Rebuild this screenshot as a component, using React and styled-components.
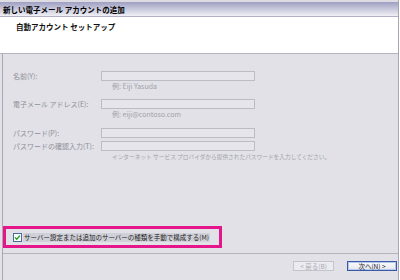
import React from "react";
import styled, { createGlobalStyle } from "styled-components";

const GlobalStyle = createGlobalStyle`
  html, body {
    margin: 0;
    padding: 0;
    background: #fff;
  }
  body {
    font-family: "Noto Sans CJK JP", "Liberation Sans", sans-serif;
  }
`;

const Window = styled.div`
  width: 399px;
  height: 280px;
  box-sizing: border-box;
  border-right: 1px solid #a6a6b0;
  display: flex;
  flex-direction: column;
  background: #e1e1e7;
`;

const TitleBar = styled.div`
  height: 17px;
  box-sizing: border-box;
  border-top: 2px solid #dcdce2;
  border-bottom: 1px solid #b2b2c4;
  background: linear-gradient(#9e9ec2, #c8c8dc 50%, #f0f0f5);
  padding-left: 3px;
  display: flex;
  align-items: center;
  font-size: 7.5px;
  font-weight: bold;
  color: #000;
`;

const Header = styled.div`
  height: 37px;
  box-sizing: border-box;
  background: #fff;
  border-bottom: 1px solid #b4b4be;
  padding: 5px 0 0 16px;
  font-size: 7.5px;
  line-height: 10px;
  font-weight: bold;
  color: #111;
`;

const Body = styled.div`
  flex: 1;
  display: flex;
  padding-left: 2px;
`;

const Content = styled.div`
  flex: 1;
  display: flex;
  flex-direction: column;
  border-left: 1px solid #a8a8b2;
`;

const Form = styled.div`
  padding: 17px 0 0 10px;
  display: flex;
  flex-direction: column;
`;

const Row = styled.div`
  display: grid;
  grid-template-columns: 88px 154px;
  align-items: center;
  height: 10px;
  margin-top: ${({ $gap }) => $gap || 0}px;
`;

const Label = styled.span`
  font-size: 7px;
  line-height: 10px;
  color: #909098;
  white-space: nowrap;
`;

const Field = styled.div`
  height: 10px;
  box-sizing: border-box;
  border: 1px solid #bcbcc4;
  background: #e5e5eb;
`;

const Hint = styled.div`
  padding-left: ${({ $indent }) => $indent}px;
  height: ${({ $h }) => $h}px;
  line-height: ${({ $h }) => $h}px;
  font-size: ${({ $size }) => $size}px;
  color: #a2a2aa;
  white-space: nowrap;
`;

const CheckArea = styled.div`
  margin-top: auto;
  margin-bottom: 5px;
  width: 219px;
  height: 22px;
  box-sizing: border-box;
  border: 3px solid #e5168a;
  display: flex;
  align-items: center;
  padding-left: 7px;
`;

const CheckLabel = styled.span`
  margin-left: 1px;
  padding: 0 1px;
  background: #d0d0d8;
  font-size: 6.5px;
  line-height: 9px;
  color: #222;
  white-space: nowrap;
`;

const Footer = styled.div`
  height: 27px;
  box-sizing: border-box;
  border-top: 1px solid #b4b4bc;
  display: flex;
  justify-content: flex-end;
  align-items: flex-start;
  gap: 13px;
  padding: 7px 1px 0 0;
`;

const Button = styled.div`
  width: ${({ $w }) => $w}px;
  height: 10px;
  box-sizing: border-box;
  display: flex;
  align-items: center;
  justify-content: center;
  font-size: 6.5px;
  white-space: nowrap;
  border: 1px solid ${({ $primary }) => ($primary ? "#3a5aa6" : "#c4c4cc")};
  box-shadow: ${({ $primary }) => ($primary ? "inset 0 0 0 1px #b4c8ee" : "none")};
  background: ${({ $primary }) =>
    $primary ? "linear-gradient(#fbfbfd, #e6e6ee)" : "#ececf0"};
  color: ${({ $primary }) => ($primary ? "#111" : "#a8a8b0")};
`;

function CheckBox() {
  return (
    <svg width="9" height="9" viewBox="0 0 9 9">
      <rect x="0.5" y="0.5" width="8" height="8" fill="#fff" stroke="#4a6c9c" />
      <path d="M2 4.4 L3.7 6.3 L7 2.6" fill="none" stroke="#1aa01a" strokeWidth="1.4" />
    </svg>
  );
}

export default function App() {
  return (
    <>
      <GlobalStyle />
      <Window>
        <TitleBar>新しい電子メール アカウントの追加</TitleBar>
        <Header>自動アカウント セットアップ</Header>
        <Body>
          <Content>
            <Form>
              <Row>
                <Label>名前(Y):</Label>
                <Field />
              </Row>
              <Hint $indent={99} $h={10} $size={7}>例: Eiji Yasuda</Hint>
              <Row $gap={8}>
                <Label>電子メール アドレス(E):</Label>
                <Field />
              </Row>
              <Hint $indent={99} $h={11} $size={7}>例: eiji@contoso.com</Hint>
              <Row $gap={8}>
                <Label>パスワード(P):</Label>
                <Field />
              </Row>
              <Row $gap={3}>
                <Label>パスワードの確認入力(T):</Label>
                <Field />
              </Row>
              <Hint $indent={99} $h={12} $size={5.7}>
                インターネット サービス プロバイダから提供されたパスワードを入力してください。
              </Hint>
            </Form>
            <CheckArea>
              <CheckBox />
              <CheckLabel>サーバー設定または追加のサーバーの種類を手動で構成する(M)</CheckLabel>
            </CheckArea>
            <Footer>
              <Button $w={41}>&lt; 戻る(B)</Button>
              <Button $w={50} $primary>次へ(N) &gt;</Button>
            </Footer>
          </Content>
        </Body>
      </Window>
    </>
  );
}
